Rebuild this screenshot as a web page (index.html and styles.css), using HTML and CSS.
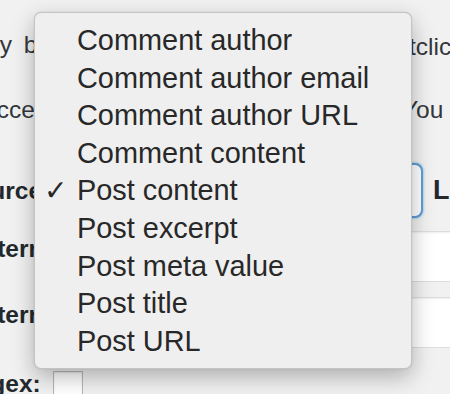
FILE: index.html
```html
<!DOCTYPE html>
<html lang="en">
<head>
<meta charset="utf-8">
<title>Source menu</title>
<link rel="stylesheet" href="styles.css">
</head>
<body>
<div class="wrap">
  <p class="desc desc-first"><span class="lead">automatically by the plugin on save, or righ</span><span class="tail">tclick to edit</span></p>
  <p class="desc desc-second"><span class="lead">accepts plain text and regular expressions.</span><span class="tail">You can</span></p>
  <div class="form">
    <div class="row row-source">
      <label class="label">Source:</label>
      <div class="field">
        <div class="select">Post content</div>
        <span class="side">Limit</span>
      </div>
    </div>
    <div class="row">
      <label class="label">Pattern:</label>
      <div class="field"><div class="input"></div></div>
    </div>
    <div class="row row-second">
      <label class="label">Pattern:</label>
      <div class="field"><div class="input"></div></div>
    </div>
    <div class="row row-regex">
      <label class="label">Regex:</label>
      <div class="field"><div class="checkbox"></div></div>
    </div>
  </div>
</div>

<ul class="menu">
  <li class="item">Comment author</li>
  <li class="item">Comment author email</li>
  <li class="item">Comment author URL</li>
  <li class="item">Comment content</li>
  <li class="item checked">Post content</li>
  <li class="item">Post excerpt</li>
  <li class="item">Post meta value</li>
  <li class="item">Post title</li>
  <li class="item">Post URL</li>
</ul>
</body>
</html>
```
FILE: styles.css
```css
html, body {
  margin: 0;
  padding: 0;
}
body {
  width: 450px;
  height: 394px;
  overflow: hidden;
  background: #f1f1f1;
  position: relative;
  font-family: "Liberation Sans", Arial, sans-serif;
  color: #32373c;
}
.wrap {
  margin-left: -36px;
  padding-top: 25px;
}
.desc {
  margin: 0 0 25px;
  font-size: 24.5px;
  line-height: 40px;
  white-space: nowrap;
}
.lead {
  display: inline-block;
  vertical-align: top;
  overflow: hidden;
}
.tail {
  display: inline-block;
  vertical-align: top;
}
.desc-first .lead {
  width: 445px;
  text-indent: -95px;
  word-spacing: 5px;
}
.desc-first .tail {
  position: relative;
  top: 2px;
}
.desc-second .lead {
  width: 438px;
  text-indent: 19px;
}
.form {
  margin-top: 33px;
  display: flex;
  flex-direction: column;
}
.row {
  display: grid;
  grid-template-columns: 89px 1fr;
  align-items: start;
}
.label {
  font-size: 24.5px;
  font-weight: bold;
  line-height: 28px;
  color: #23282d;
  white-space: nowrap;
  padding-top: 4px;
  margin-left: -5px;
}
.row-source {
  align-items: center;
}
.row-source .label {
  padding-top: 0;
}
.field {
  display: flex;
  align-items: center;
  gap: 10px;
  white-space: nowrap;
}
.select {
  box-sizing: border-box;
  width: 370px;
  height: 55px;
  border: 2px solid #5b9dd9;
  border-radius: 8px;
  background: #fff;
  box-shadow: 0 0 3px rgba(30, 140, 190, 0.6);
  font-size: 24px;
  padding: 12px 14px;
  flex: none;
}
.side {
  font-size: 27px;
  font-weight: bold;
  color: #23282d;
}
.row + .row {
  margin-top: 13px;
}
.row.row-second {
  margin-top: 15px;
}
.row.row-regex {
  margin-top: 21px;
}
.row-regex .label {
  padding-top: 1px;
}
.input {
  box-sizing: border-box;
  width: 500px;
  height: 51px;
  background: #fff;
  border: 1px solid #ddd;
  box-shadow: inset 0 1px 2px rgba(0, 0, 0, 0.07);
  flex: none;
}
.checkbox {
  box-sizing: border-box;
  width: 30px;
  height: 30px;
  margin-top: 2px;
  background: #fff;
  border: 1px solid #b4b9be;
  box-shadow: inset 0 1px 2px rgba(0, 0, 0, 0.1);
}
.row-regex .field {
  align-items: flex-start;
}

.menu {
  position: absolute;
  left: 34px;
  top: 12px;
  box-sizing: border-box;
  width: 378px;
  height: 357px;
  margin: 0;
  padding: 9px 0;
  list-style: none;
  background: #efefef;
  border: 1px solid rgba(0, 0, 0, 0.18);
  border-radius: 7px;
  box-shadow: 0 8px 22px rgba(0, 0, 0, 0.28), 0 0 2px rgba(0, 0, 0, 0.1);
}
.item {
  position: relative;
  padding-left: 42px;
  font-size: 28.9px;
  line-height: 37.6px;
  height: 37.6px;
  color: #282828;
  white-space: nowrap;
}
.checked::before {
  content: "\2713";
  position: absolute;
  left: 9px;
  top: 0;
  font-family: "DejaVu Sans", sans-serif;
  font-size: 28px;
  font-weight: bold;
  color: #282828;
}
```
